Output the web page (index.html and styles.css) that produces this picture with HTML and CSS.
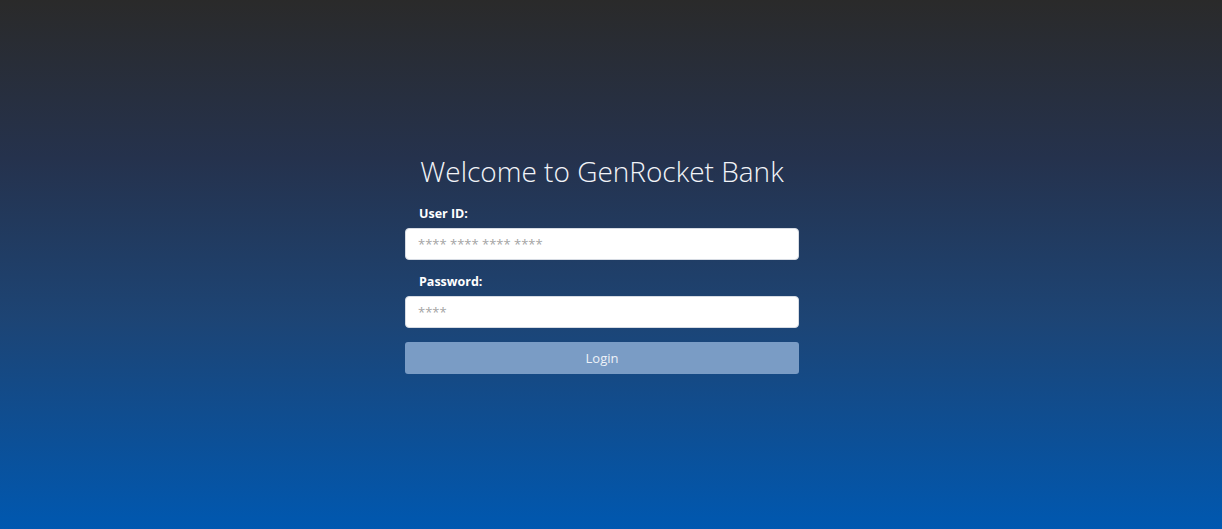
FILE: index.html
```html
<!DOCTYPE html>
<html>
<head>
<meta charset="utf-8">
<link rel="stylesheet" href="styles.css">
<title>GenRocket Bank</title>
</head>
<body>
<div class="page">
  <form class="login">
    <h1 class="title">Welcome to GenRocket Bank</h1>
    <label class="label" for="uid">User ID:</label>
    <input class="field" id="uid" type="text" placeholder="**** **** **** ****">
    <label class="label" for="pwd">Password:</label>
    <input class="field" id="pwd" type="password" placeholder="****">
    <button class="btn" type="button">Login</button>
  </form>
</div>
</body>
</html>
```

FILE: styles.css
```css
html, body {
  margin: 0;
  padding: 0;
  height: 100%;
}
body {
  background: linear-gradient(to bottom, #2a2a2a 0%, #25324d 30%, #1d4474 60%, #0058b0 100%);
  font-family: "Open Sans", "Liberation Sans", sans-serif;
  color: #fff;
}
.page {
  height: 100%;
  display: flex;
  justify-content: center;
  padding-right: 18px;
  box-sizing: border-box;
}
.login {
  width: 394px;
  display: flex;
  flex-direction: column;
  padding-top: 152px;
}
.title {
  margin: 0;
  font-weight: 300;
  font-size: 28px;
  line-height: 38px;
  text-align: center;
  color: #f2f4f8;
}
.label {
  font-weight: 700;
  font-size: 12.5px;
  line-height: 16px;
  padding-left: 14px;
  margin-top: 16px;
  margin-bottom: 6px;
}
.label + .field + .label {
  margin-top: 14px;
}
.field {
  height: 32px;
  box-sizing: border-box;
  border: 1px solid #d6dbe3;
  border-radius: 4px;
  background: #fff;
  padding: 0 12px;
  font-family: "Open Sans", "Liberation Sans", sans-serif;
  font-size: 13px;
  color: #333;
  outline: none;
}
.field::placeholder {
  color: #a4a4a4;
}
.btn {
  margin-top: 14px;
  height: 32px;
  border: none;
  border-radius: 3px;
  background: #7a9cc5;
  color: #eef2f8;
  font-family: "Open Sans", "Liberation Sans", sans-serif;
  font-size: 13px;
}
```
